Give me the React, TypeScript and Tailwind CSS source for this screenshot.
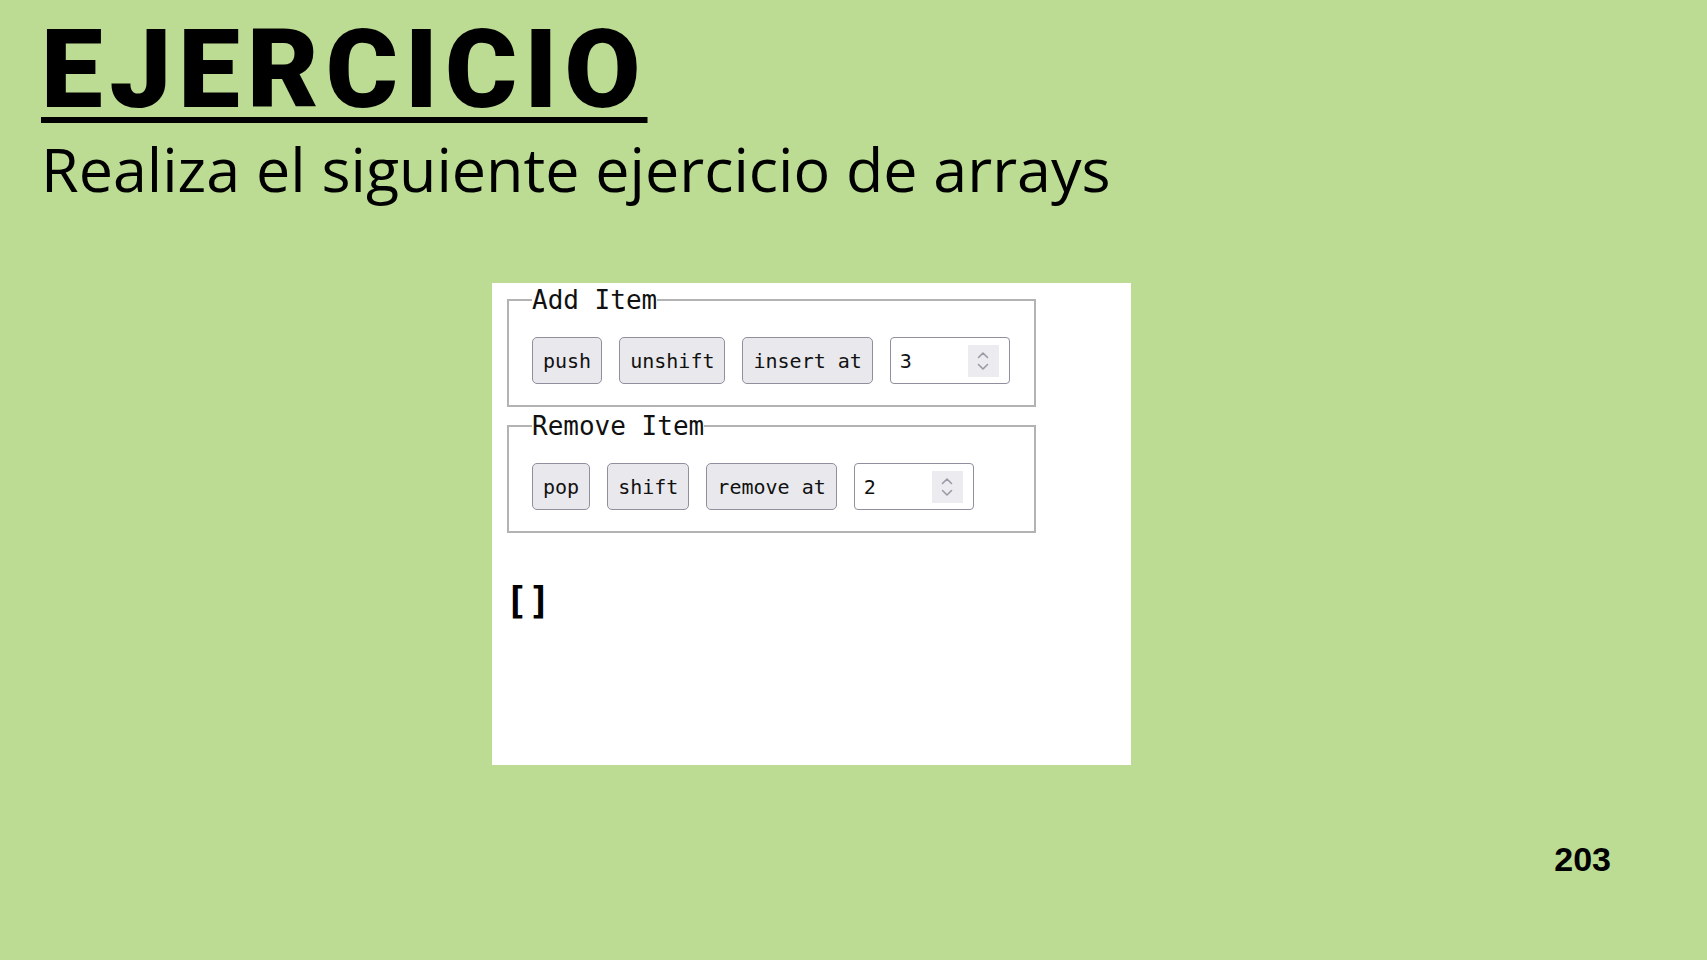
import React from 'react'

const mono = { fontFamily: '"DejaVu Sans Mono", "Liberation Mono", monospace' }

function Btn({ label }: { label: string }) {
  return (
    <div
      className="flex h-[47px] items-center rounded-[5px] border-[1.5px] border-[#8f8f9d] bg-[#e9e9ed] px-[10px] text-[20px] leading-none text-[#111]"
      style={mono}
    >
      {label}
    </div>
  )
}

function NumberBox({ value }: { value: string }) {
  return (
    <div className="flex h-[47px] w-[120px] items-center justify-between rounded-[4px] border-[1.5px] border-[#8f8f9d] bg-white pl-[9px] pr-[10px]">
      <span className="text-[20px] leading-none text-[#111]" style={mono}>
        {value}
      </span>
      <div className="flex h-[32px] w-[31px] items-center justify-center bg-[#ececf0]">
        <svg width="14" height="22" viewBox="0 0 14 22" fill="none" stroke="#9a9aa6" strokeWidth="1.6" strokeLinecap="round" strokeLinejoin="round">
          <path d="M2.5 7.5 7 3l4.5 4.5" />
          <path d="M2.5 14.5 7 19l4.5-4.5" />
        </svg>
      </div>
    </div>
  )
}

function Group({ title, buttons, value }: { title: string; buttons: string[]; value: string }) {
  return (
    <fieldset className="w-[529px] border-2 border-[#b3b3b3] px-[23px] pt-[22px] pb-[21px]">
      <legend className="text-[26px] leading-[30px] text-[#111]" style={mono}>
        {title}
      </legend>
      <div className="flex items-center gap-[17px]">
        {buttons.map((b) => (
          <Btn key={b} label={b} />
        ))}
        <NumberBox value={value} />
      </div>
    </fieldset>
  )
}

export default function App() {
  return (
    <div className="flex h-[960px] w-[1707px] flex-col overflow-hidden bg-[#bcdb93] text-black">
      <div className="pl-[41px] pt-[15px]">
        <h1
          className="h-[110px] text-[110px] font-black leading-none tracking-[7px] underline decoration-[6px] underline-offset-[10px]"
          style={{ fontFamily: 'Roboto, "Liberation Sans", sans-serif' }}
        >
          EJERCICIO
        </h1>
        <p
          className="mt-[13px] text-[61px] leading-none"
          style={{ fontFamily: '"Open Sans", "Noto Sans", sans-serif' }}
        >
          Realiza el siguiente ejercicio de arrays
        </p>
      </div>

      <div className="ml-[492px] mt-[84px] flex h-[482px] w-[639px] flex-col bg-white pl-[15px] pt-[2px]">
        <Group title="Add Item" buttons={['push', 'unshift', 'insert at']} value="3" />
        <div className="h-[4px]" />
        <Group title="Remove Item" buttons={['pop', 'shift', 'remove at']} value="2" />
        <div className="ml-[-2px] mt-[48px] text-[38px] font-bold leading-none text-black" style={mono}>
          []
        </div>
      </div>

      <div className="mt-[77px] flex justify-end pr-[96px]">
        <span
          className="text-[34px] font-bold leading-none"
          style={{ fontFamily: '"Liberation Sans", Arial, sans-serif' }}
        >
          203
        </span>
      </div>
    </div>
  )
}
